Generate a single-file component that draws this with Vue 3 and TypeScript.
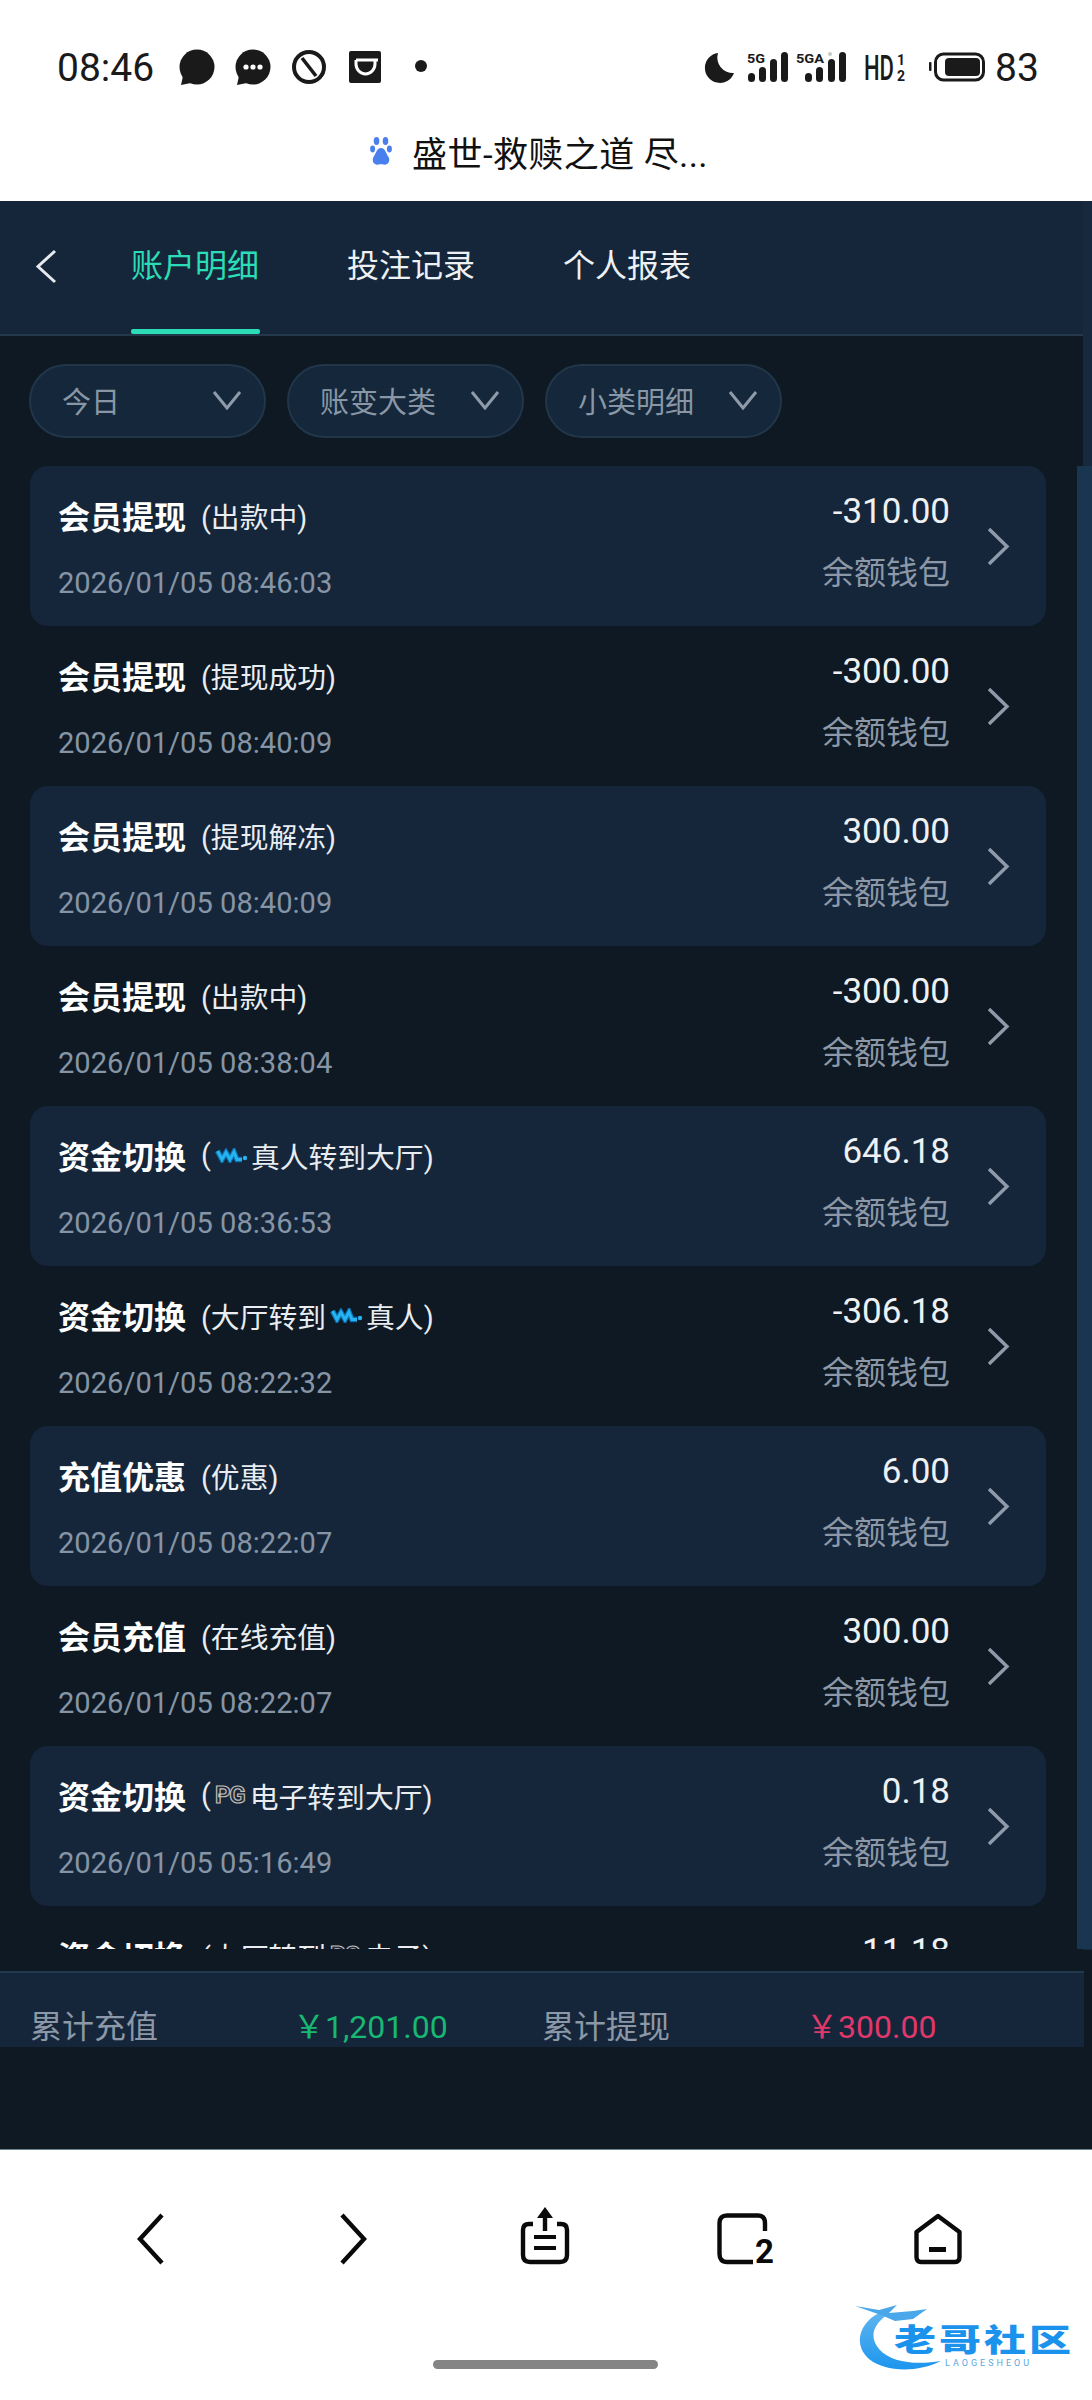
<script setup lang="ts">
interface Row {
  title: string
  before: string
  logo?: 'wm' | 'pg'
  after: string
  time: string
  amount: string
}

const tabs: string[] = ['账户明细', '投注记录', '个人报表']
const filters: string[] = ['今日', '账变大类', '小类明细']
const rows: Row[] = [
  { title: '会员提现', before: '(出款中)', after: '', time: '2026/01/05 08:46:03', amount: '-310.00' },
  { title: '会员提现', before: '(提现成功)', after: '', time: '2026/01/05 08:40:09', amount: '-300.00' },
  { title: '会员提现', before: '(提现解冻)', after: '', time: '2026/01/05 08:40:09', amount: '300.00' },
  { title: '会员提现', before: '(出款中)', after: '', time: '2026/01/05 08:38:04', amount: '-300.00' },
  { title: '资金切换', before: '(', logo: 'wm', after: '真人转到大厅)', time: '2026/01/05 08:36:53', amount: '646.18' },
  { title: '资金切换', before: '(大厅转到', logo: 'wm', after: '真人)', time: '2026/01/05 08:22:32', amount: '-306.18' },
  { title: '充值优惠', before: '(优惠)', after: '', time: '2026/01/05 08:22:07', amount: '6.00' },
  { title: '会员充值', before: '(在线充值)', after: '', time: '2026/01/05 08:22:07', amount: '300.00' },
  { title: '资金切换', before: '(', logo: 'pg', after: '电子转到大厅)', time: '2026/01/05 05:16:49', amount: '0.18' },
  { title: '资金切换', before: '(大厅转到', logo: 'pg', after: '电子)', time: '2026/01/05 05:16:20', amount: '-11.18' }
]
</script>

<template>
  <div class="page">
    <div class="status">
      <svg class="st-left" width="375" height="56" viewBox="57 39 375 56">
        <text x="57" y="81" class="st-time">08:46</text>
        <circle cx="197" cy="67" r="17.5" fill="#1a1a1a" />
        <path d="M183 76 L181 85 L191 83 Z" fill="#1a1a1a" />
        <circle cx="253" cy="67" r="17.5" fill="#1a1a1a" />
        <path d="M239 76 L237 85 L247 83 Z" fill="#1a1a1a" />
        <circle cx="246" cy="67" r="2.6" fill="#fff" />
        <circle cx="253" cy="67" r="2.6" fill="#fff" />
        <circle cx="260" cy="67" r="2.6" fill="#fff" />
        <circle cx="309" cy="67" r="15" fill="none" stroke="#1a1a1a" stroke-width="4" />
        <path d="M302 58 L316 76" stroke="#1a1a1a" stroke-width="3.6" />
        <rect x="349" y="51" width="32" height="32" rx="2" fill="#1a1a1a" />
        <path d="M356 60 H378 M356 60 V64 A9.5 10 0 0 0 375 64 V60" fill="none" stroke="#fff" stroke-width="3" />
        <circle cx="421" cy="66" r="6" fill="#1a1a1a" />
      </svg>
      <svg class="st-right" width="335" height="56" viewBox="703 39 335 56">
        <path d="M718 53 A15 15 0 1 0 734 73 A15.5 15.5 0 0 1 718 53 Z" fill="#1a1a1a" />
        <text x="747" y="63" class="st-net" textLength="18" lengthAdjust="spacingAndGlyphs">5G</text>
        <rect x="748" y="73" width="7" height="9" rx="3.5" fill="#1a1a1a" />
        <rect x="759" y="67" width="7" height="15" rx="3.5" fill="#1a1a1a" />
        <rect x="770" y="59" width="7" height="23" rx="3.5" fill="#1a1a1a" />
        <rect x="781" y="52" width="7" height="30" rx="3.5" fill="#1a1a1a" />
        <text x="796" y="63" class="st-net" textLength="28" lengthAdjust="spacingAndGlyphs">5GA</text>
        <circle cx="830" cy="54" r="2" fill="#c8c8c8" />
        <rect x="805" y="73" width="7" height="9" rx="3.5" fill="#1a1a1a" />
        <rect x="816" y="67" width="7" height="15" rx="3.5" fill="#1a1a1a" />
        <rect x="828" y="59" width="7" height="23" rx="3.5" fill="#1a1a1a" />
        <rect x="839" y="52" width="7" height="30" rx="3.5" fill="#1a1a1a" />
        <text x="864" y="80" class="st-hd" textLength="30" lengthAdjust="spacingAndGlyphs">HD</text>
        <text x="897" y="65" class="st-frac">1</text>
        <text x="897" y="81" class="st-frac">2</text>
        <rect x="929" y="62" width="2.5" height="9" rx="1" fill="#1a1a1a" />
        <rect x="935.5" y="54" width="48" height="26" rx="8" fill="none" stroke="#1a1a1a" stroke-width="3" />
        <rect x="945" y="58" width="35" height="18" rx="4" fill="#1a1a1a" />
        <text x="995" y="81" class="st-time">83</text>
      </svg>
    </div>

    <div class="urlbar">
      <svg width="22" height="30" viewBox="0 0 22 30">
        <ellipse cx="6.5" cy="5" rx="2.8" ry="4" fill="#4a80ee" />
        <ellipse cx="15.5" cy="5" rx="2.8" ry="4" fill="#4a80ee" />
        <ellipse cx="2.6" cy="13" rx="2.5" ry="3.4" fill="#4a80ee" />
        <ellipse cx="19.4" cy="13" rx="2.5" ry="3.4" fill="#4a80ee" />
        <path d="M11 12 C7 12 6 17 3.5 21 C1 26 5 29.5 8.5 28.5 C10 28 12 28 13.5 28.5 C17 29.5 21 26 18.5 21 C16 17 15 12 11 12 Z" fill="#4a80ee" />
      </svg>
      <span>盛世-救赎之道 尽...</span>
    </div>

    <div class="app">
      <div class="strip"></div>
      <header class="header">
        <svg class="back" width="23" height="35" viewBox="0 0 23 35">
          <polyline points="20,2 3,17.5 20,33" fill="none" stroke="#e6eaee" stroke-width="3" />
        </svg>
        <div class="tabs">
          <div v-for="(t, i) in tabs" :key="t" class="tab" :class="{ active: i === 0 }">{{ t }}</div>
        </div>
      </header>

      <div class="filters">
        <div v-for="f in filters" :key="f" class="filter">
          <span>{{ f }}</span>
          <svg width="30" height="20" viewBox="0 0 30 20">
            <polyline points="2,2 15,18 28,2" fill="none" stroke="#8f9baa" stroke-width="3" />
          </svg>
        </div>
      </div>

      <div class="listwrap">
        <div class="list">
          <div v-for="(r, i) in rows" :key="i" class="row" :class="{ odd: i % 2 === 0 }">
            <div class="left">
              <div class="titleline">
                <span class="title">{{ r.title }}</span>
                <span class="sub">
                  {{ r.before }}
                  <svg v-if="r.logo === 'wm'" class="wm" width="33" height="15" viewBox="0 0 33 15">
                    <polyline points="2.5,3 7,11.5 11,4.5 15,11.5 19,4 22,11.5 27,11.5" fill="none" stroke="#0d6fb0" stroke-width="5.4" />
                    <polyline points="2.5,3 7,11.5 11,4.5 15,11.5 19,4 22,11.5 27,11.5" fill="none" stroke="#25b4f0" stroke-width="3" />
                    <circle cx="30" cy="10" r="2.2" fill="#25b4f0" />
                  </svg>
                  <span v-if="r.logo === 'pg'" class="pg">PG</span>
                  {{ r.after }}
                </span>
              </div>
              <div class="time">{{ r.time }}</div>
            </div>
            <div class="right">
              <div class="amount">{{ r.amount }}</div>
              <div class="wallet">余额钱包</div>
            </div>
            <svg class="arrow" width="23" height="39" viewBox="0 0 23 39">
              <polyline points="2,2 20,19.5 2,37" fill="none" stroke="#8f9baa" stroke-width="3.4" />
            </svg>
          </div>
        </div>
        <div class="scroll"></div>
      </div>

      <div class="summary">
        <span class="s-label">累计充值</span>
        <span class="s-val green">￥1,201.00</span>
        <span class="s-label">累计提现</span>
        <span class="s-val pink">￥300.00</span>
      </div>
    </div>

    <nav class="nav">
      <svg class="n-back" width="28" height="52" viewBox="0 0 28 52">
        <polyline points="25,2 3,26 25,50" fill="none" stroke="#0a0a0a" stroke-width="4.4" />
      </svg>
      <svg class="n-fwd" width="28" height="52" viewBox="0 0 28 52">
        <polyline points="3,2 25,26 3,50" fill="none" stroke="#0a0a0a" stroke-width="4.4" />
      </svg>
      <svg class="n-share" width="50" height="58" viewBox="0 0 50 58">
        <path d="M13 17 H9 Q3 17 3 23 V48 Q3 55 10 55 H40 Q47 55 47 48 V23 Q47 17 41 17 H37" fill="none" stroke="#0a0a0a" stroke-width="4.4" />
        <path d="M25 0 L17 11 H33 Z" fill="#0a0a0a" />
        <path d="M25 9 V24" stroke="#0a0a0a" stroke-width="4.4" />
        <path d="M14 30 H36 M14 41 H36" stroke="#0a0a0a" stroke-width="4" />
      </svg>
      <svg class="n-tabs" width="56" height="52" viewBox="0 0 56 52">
        <path d="M36 49 H10 Q2.5 49 2.5 41 V10 Q2.5 2.5 10 2.5 H41 Q48 2.5 48 10 V18" fill="none" stroke="#0a0a0a" stroke-width="4.4" />
        <text x="38" y="50" class="n-two">2</text>
      </svg>
      <svg class="n-home" width="48" height="52" viewBox="0 0 48 52">
        <path d="M24 3 L45.5 19 V44 Q45.5 49 41 49 H7 Q2.5 49 2.5 44 V19 Z" fill="none" stroke="#0a0a0a" stroke-width="4.4" stroke-linejoin="round" />
        <rect x="15" y="34" width="17" height="5" fill="#0a0a0a" />
      </svg>
    </nav>
    <div class="homebar"></div>

    <div class="wm-logo">
      <svg width="100" height="72" viewBox="0 0 100 72">
        <defs>
          <linearGradient id="dr" x1="0" y1="0" x2="0" y2="1">
            <stop offset="0" stop-color="#5fb4ee" />
            <stop offset="1" stop-color="#1c96ee" />
          </linearGradient>
        </defs>
        <path d="M24 10 C4 20 -2 42 14 56 C30 69 62 70 86 58 C62 62 36 60 24 46 C14 34 18 22 32 12 Z" fill="url(#dr)" />
        <path d="M0 3 L24 7 L42 2 L34 10 L58 8 L72 6 L58 16 L40 18 L26 12 Z" fill="#4aa8ea" />
      </svg>
      <span class="wm-cn">老哥社区</span>
      <span class="wm-en">LAOGESHEOU</span>
    </div>
  </div>
</template>

<style scoped>
.page {
  position: relative;
  width: 1092px;
  height: 2400px;
  display: flex;
  flex-direction: column;
  overflow: hidden;
  background: #fff;
  font-family: Roboto, "Noto Sans CJK SC", sans-serif;
}
.status {
  height: 74px;
  margin-top: 30px;
  padding: 0 54px 0 57px;
  display: flex;
  align-items: center;
  justify-content: space-between;
  box-sizing: border-box;
}
.st-time { font: 400 39px Roboto, sans-serif; fill: #1a1a1a; }
.st-net { font: 700 13.5px Roboto, sans-serif; fill: #1a1a1a; }
.st-hd { font: 500 35px Roboto, sans-serif; fill: #1a1a1a; }
.st-frac { font: 700 14px Roboto, sans-serif; fill: #1a1a1a; }
.urlbar {
  height: 97px;
  padding: 0 14px 3px 0;
  box-sizing: border-box;
  display: flex;
  align-items: center;
  justify-content: center;
  gap: 20px;
  color: #111;
  font-size: 35px;
  letter-spacing: 0.4px;
}
.app {
  position: relative;
  height: 1949px;
  display: flex;
  flex-direction: column;
  background: #0e1923;
  border-bottom: 1px solid #6f8290;
  box-sizing: border-box;
}
.strip {
  position: absolute;
  top: 0;
  right: 0;
  width: 9px;
  height: 1749px;
  background: #16293e;
}
.header {
  height: 135px;
  display: flex;
  align-items: flex-start;
  background: #15263a;
  border-bottom: 2px solid #24384c;
  box-sizing: border-box;
}
.back {
  margin: 48px 0 0 35px;
}
.tabs {
  display: flex;
  gap: 87px;
  margin-left: 73px;
}
.tab {
  position: relative;
  height: 133px;
  width: 129px;
  line-height: 130px;
  color: #eef1f4;
  font-size: 32px;
  white-space: nowrap;
}
.tab.active {
  color: #2bdcb6;
}
.tab.active::after {
  content: "";
  position: absolute;
  left: 0;
  right: 0;
  bottom: 0;
  height: 5px;
  border-radius: 2px;
  background: #2bdcb6;
}
.filters {
  display: flex;
  gap: 21px;
  padding: 28px 29px;
}
.filter {
  width: 237px;
  height: 74px;
  display: flex;
  align-items: center;
  justify-content: space-between;
  padding: 0 22px 2px 31px;
  box-sizing: border-box;
  border: 2px solid #22364a;
  border-radius: 37px;
  background: #15273a;
  color: #8996a5;
  font-size: 29px;
}
.listwrap {
  position: relative;
  height: 1483px;
  overflow: hidden;
}
.list {
  width: 1016px;
  margin-left: 30px;
  display: flex;
  flex-direction: column;
}
.scroll {
  position: absolute;
  top: 0;
  right: 0;
  width: 15px;
  height: 100%;
  background: #1a3550;
}
.row {
  height: 160px;
  flex: none;
  display: flex;
  align-items: flex-start;
  border-radius: 18px;
}
.row.odd {
  background: #15263a;
}
.left {
  flex: 1;
  padding-left: 28px;
}
.titleline {
  margin-top: 26px;
  height: 46px;
  display: flex;
  align-items: center;
  gap: 15px;
  white-space: nowrap;
}
.title {
  color: #fff;
  font-size: 32px;
  font-weight: 700;
}
.sub {
  display: inline-flex;
  align-items: center;
  color: #e9edf1;
  font-size: 28.8px;
}
.wm {
  margin: 0 3px 0 4px;
}
.pg {
  margin: 0 5px 0 4px;
  font-size: 24px;
  font-weight: 700;
  letter-spacing: -1px;
  color: #1a2a3c;
  -webkit-text-stroke: 1.2px #c4bdb8;
}
.time {
  margin-top: 24px;
  line-height: 42px;
  color: #8695a6;
  font-size: 29.1px;
}
.right {
  width: 201px;
  text-align: right;
}
.amount {
  margin-top: 24px;
  line-height: 44px;
  color: #eef1f4;
  font-size: 35px;
}
.wallet {
  margin-top: 17px;
  line-height: 44px;
  color: #8c98a7;
  font-size: 32px;
}
.arrow {
  margin: 61px 36px 0 37px;
  flex: none;
}
.summary {
  margin-top: 22px;
  width: 1084px;
  height: 76px;
  padding: 32px 0 0 30px;
  box-sizing: border-box;
  display: grid;
  grid-template-columns: 263px 249px 264px auto;
  align-items: start;
  overflow: hidden;
  background: #15263a;
  border-top: 2px solid #22384c;
}
.s-label,
.s-val {
  line-height: 44px;
  font-size: 32px;
}
.s-label {
  color: #8c98a7;
}
.green {
  color: #18b873;
}
.pink {
  color: #e0386a;
}
.nav {
  height: 210px;
  padding: 63px 0 0 137px;
  box-sizing: border-box;
  display: flex;
  align-items: flex-start;
}
.n-fwd { margin-left: 174px; }
.n-share { margin: -6px 0 0 153px; }
.n-tabs { margin-left: 147px; }
.n-home { margin-left: 141px; }
.n-two { font: 700 33px Roboto, sans-serif; fill: #0a0a0a; }
.homebar {
  width: 225px;
  height: 9px;
  margin-left: 433px;
  border-radius: 5px;
  background: #858585;
}
.wm-logo {
  position: absolute;
  left: 855px;
  top: 2303px;
  width: 220px;
  height: 72px;
}
.wm-cn {
  position: absolute;
  left: 39px;
  top: 18px;
  color: #1b92ec;
  font-size: 42px;
  font-weight: 900;
  letter-spacing: 3px;
  line-height: 40px;
  white-space: nowrap;
  transform: scaleY(0.72);
}
.wm-en {
  position: absolute;
  left: 90px;
  top: 55px;
  color: #5aa7df;
  font-size: 9px;
  letter-spacing: 3px;
  line-height: 11px;
}
</style>
